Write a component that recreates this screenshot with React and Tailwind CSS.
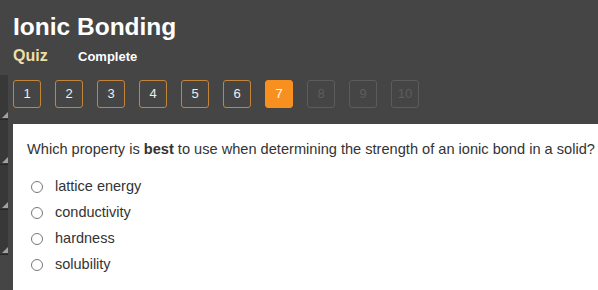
import React from "react";

const nums = [1, 2, 3, 4, 5, 6, 7, 8, 9, 10];
const options = ["lattice energy", "conductivity", "hardness", "solubility"];

function Section() {
  return (
    <div className="relative h-[45px] w-[8px] bg-[#383838] border-b border-[#262626]">
      <svg className="absolute right-0 bottom-[1px]" width="6" height="6" viewBox="0 0 6 6">
        <polygon points="6,0 6,6 0,6" fill="#a0a0a0" />
      </svg>
    </div>
  );
}

export default function App() {
  return (
    <div
      className="relative w-[598px] h-[290px] overflow-hidden bg-[#454545] flex flex-col"
      style={{ fontFamily: '"Liberation Sans", Arial, sans-serif' }}
    >
      <div className="absolute left-0 top-[75px] flex flex-col">
        <Section />
        <Section />
        <Section />
        <Section />
      </div>
      <div className="pl-[13px] pt-[13px]">
        <div className="text-[24.5px] leading-[28px] font-bold text-white">Ionic Bonding</div>
        <div className="mt-[5px] flex items-baseline h-[20px]">
          <span className="text-[16px] leading-[20px] font-bold text-[#eedfa5] w-[65px]">Quiz</span>
          <span className="text-[13px] leading-[20px] font-bold text-white">Complete</span>
        </div>
        <div className="mt-[14px] flex gap-[14px]">
          {nums.map((n) => {
            const cls =
              n === 7
                ? "bg-[#f7901e] border-[#f7901e] text-white"
                : n > 7
                ? "border-[#5c5c5c] text-[#5e5e5e]"
                : "border-[#c4843a] text-[#eeeeee]";
            return (
              <div
                key={n}
                className={
                  "w-[28px] h-[28px] rounded-[3px] border flex items-center justify-center text-[13px] " +
                  cls
                }
              >
                {n}
              </div>
            );
          })}
        </div>
      </div>
      <div className="ml-[13px] mt-[16px] flex-1 bg-white pl-[14px] pt-[15px]">
        <div className="text-[14.6px] leading-[20px] text-[#333] whitespace-nowrap">
          Which property is <b>best</b> to use when determining the strength of an ionic bond in a solid?
        </div>
        <div className="mt-[15px] flex flex-col">
          {options.map((o) => (
            <div key={o} className="h-[26px] flex items-center">
              <span className="ml-[4px] w-[12px] h-[12px] rounded-full border border-[#777] bg-white" />
              <span className="ml-[12px] text-[14.5px] text-[#333]">{o}</span>
            </div>
          ))}
        </div>
      </div>
    </div>
  );
}
